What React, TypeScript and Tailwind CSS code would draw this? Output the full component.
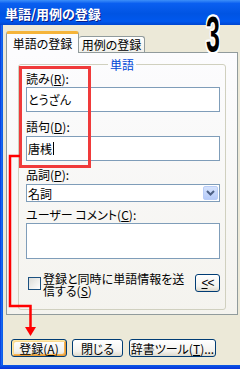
import React from 'react';

const U = ({ c }: { c: string }) => <span className="underline underline-offset-[1px]">{c}</span>;

const xpButton =
  'h-[18px] flex items-center justify-center rounded-[3px] border border-[#003c74] bg-[linear-gradient(to_bottom,#ffffff,#f3f2ee_70%,#dcd8cc)] leading-[13px]';

const Field = ({ children }: { children?: React.ReactNode }) => (
  <div className="h-[25px] border border-[#7f9db9] bg-white flex items-center pl-[1px] leading-[13px]">{children}</div>
);

export default function App() {
  return (
    <div className="relative w-[240px] h-[369px] overflow-hidden bg-[#ece9d8] flex flex-col text-black text-[12px] font-['Noto_Sans_CJK_JP','Noto_Sans',sans-serif] [font-feature-settings:'palt']">
      {/* title bar */}
      <div className="h-[25px] shrink-0 flex items-center pl-[5px] pt-[1px] bg-[linear-gradient(to_bottom,#3d8ff9_0%,#0a5ff0_14%,#0054e3_55%,#0058ee_85%,#0046d0_100%)] text-white font-bold text-[13px] leading-[15px] [text-shadow:1px_1px_0_#0a1e8a]">
        単語/用例の登録
      </div>

      <div className="flex flex-1 min-h-0">
        <div className="w-[3px] shrink-0 bg-[linear-gradient(to_right,#0831d9,#1667f0,#0a5ae6)]" />

        <div className="flex-1 flex flex-col pl-[3px] pt-[6px]">
          {/* tabs */}
          <div className="relative z-10 flex items-end h-[21px]">
            <div className="h-[22px] w-[73px] -mb-[1px] rounded-t-[3px] border-x border-[#919b9c] border-t-[3px] border-t-[#f5b43a] bg-[#fcfcfe] flex items-center justify-center pb-[1px] leading-[13px]">
              単語の登録
            </div>
            <div className="h-[16px] w-[66px] rounded-t-[3px] border-t border-r border-[#919b9c] bg-[linear-gradient(to_bottom,#ffffff,#f1f0ea)] flex items-center justify-center leading-[13px]">
              用例の登録
            </div>
          </div>

          {/* panel */}
          <div className="w-[232px] h-[263px] border border-[#919b9c] bg-[linear-gradient(to_bottom,#fcfcfe,#f4f3ee)] pt-[5px] pl-[11px]">
            <fieldset className="w-[208px] h-[252px] border border-[#d0d0bf] rounded-[3px] pl-[7px] pr-[5px]">
              <legend className="ml-[82px] px-[2px] text-[#0046d5] leading-[13px]">単語</legend>

              <div className="mt-[1px] leading-[13px]">
                読み(<U c="R" />):
              </div>
              <div className="mt-[2px]">
                <Field>とうざん</Field>
              </div>

              <div className="mt-[8px] leading-[13px]">
                語句(<U c="D" />):
              </div>
              <div className="mt-[3px]">
                <Field>
                  唐桟
                  <span className="ml-[1px] w-[1px] h-[13px] bg-black" />
                </Field>
              </div>

              <div className="mt-[7px] leading-[13px]">
                品詞(<U c="P" />):
              </div>
              <div className="mt-[3px] h-[18px] border border-[#7f9db9] bg-white flex items-center pl-[1px] pr-[1px] leading-[13px]">
                <span className="flex-1">名詞</span>
                <span className="w-[15px] h-[14px] rounded-[2px] bg-[linear-gradient(to_bottom,#d6e3fd,#b6cbf9)] border border-[#b9cdf7] flex items-center justify-center">
                  <svg width="9" height="6" viewBox="0 0 9 6">
                    <path d="M1 1 L4.5 4.5 L8 1" fill="none" stroke="#4d6185" strokeWidth="2" />
                  </svg>
                </span>
              </div>

              <div className="mt-[6px] leading-[13px]">
                ユーザー コメント(<U c="C" />):
              </div>
              <div className="mt-[2px] h-[36px] border border-[#7f9db9] bg-white" />

              <div className="mt-[15px] flex items-start">
                <span className="mt-[3px] ml-[2px] w-[13px] h-[13px] shrink-0 border border-[#1c5180] bg-[linear-gradient(135deg,#dcdcd7,#ffffff)]" />
                <div className="ml-[2px] -mt-[1px] leading-[12px]">
                  登録と同時に単語情報を送
                  <br />
                  信する(<U c="S" />)
                </div>
                <div className={`${xpButton} ml-auto w-[25px] font-['Liberation_Sans',sans-serif] tracking-[-1px]`}>
                  <U c="<" />
                  {'<'}
                </div>
              </div>
            </fieldset>
          </div>

          {/* buttons */}
          <div className="mt-[24px] ml-[5px] flex">
            <div className={`${xpButton} w-[56px] shadow-[inset_1px_1px_0_#fde9a8,inset_-1px_-1px_0_#e59a3c,inset_2px_2px_0_#fbd88e,inset_-2px_-2px_0_#f5b24f]`}>
              登録(<U c="A" />)
            </div>
            <div className={`${xpButton} ml-[5px] w-[51px]`}>閉じる</div>
            <div className={`${xpButton} ml-[6px] w-[87px]`}>
              辞書ツール(<U c="T" />)...
            </div>
          </div>
        </div>
      </div>

      <div className="h-[4px] shrink-0 bg-[linear-gradient(to_bottom,#0a5ae6,#0831d9)]" />

      {/* annotations */}
      <div className="absolute left-[19px] top-[66px] w-[72px] h-[102px] border-[3px] border-[#f03a3a]" />
      <svg className="absolute left-0 top-0 pointer-events-none" width="240" height="369">
        <polyline points="20,156 10,156 10,306 30.5,306 30.5,328" fill="none" stroke="#ff0000" strokeWidth="2.5" />
        <polygon points="25,327 36,327 30.5,336" fill="#ff0000" />
      </svg>
      <span className="absolute left-[199px] top-[10px] text-[50px] leading-none font-bold font-['Liberation_Sans',sans-serif] scale-x-[0.5] text-black [text-shadow:2px_0_0_#fff,-2px_0_0_#fff,0_2px_0_#fff,0_-2px_0_#fff,2px_2px_0_#fff,-2px_-2px_0_#fff,2px_-2px_0_#fff,-2px_2px_0_#fff]">
        3
      </span>
    </div>
  );
}
